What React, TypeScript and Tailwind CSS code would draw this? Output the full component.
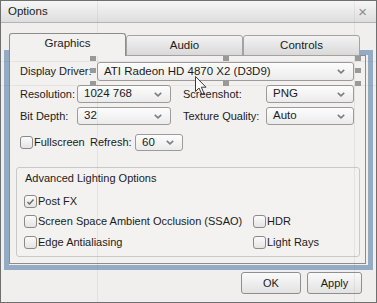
import React from "react";

const Chevron = () => (
  <svg width="8" height="5" viewBox="0 0 8 5" className="shrink-0">
    <polyline points="0.8,0.8 4,3.8 7.2,0.8" fill="none" stroke="#7d7d7d" strokeWidth="1.6" />
  </svg>
);

function Combo({ w, h = 18, text }: { w: string; h?: number; text: string }) {
  return (
    <div
      className={`${w} flex shrink-0 items-center justify-between rounded-[3px] border border-[#9b9b9b] bg-gradient-to-b from-[#fdfdfd] to-[#ebebeb] pl-[6px] pr-[8px] text-[#1b1b1b]`}
      style={{ height: h }}
    >
      <span className="whitespace-nowrap text-[11.5px] leading-none">{text}</span>
      <Chevron />
    </div>
  );
}

function Check({ checked = false }: { checked?: boolean }) {
  return (
    <div className="flex h-[13px] w-[13px] shrink-0 items-center justify-center rounded-[3px] border border-[#8a8a8a] bg-gradient-to-b from-[#fbfbfb] to-[#e4e4e4]">
      {checked && (
        <svg width="9" height="8" viewBox="0 0 9 8">
          <polyline points="1.5,4 3.5,6 7.5,1.5" fill="none" stroke="#666" strokeWidth="1.4" />
        </svg>
      )}
    </div>
  );
}

function Handle({ x, y }: { x: number; y: number }) {
  return <div className="absolute h-[5px] w-[6px] bg-[#999999]" style={{ left: x, top: y }} />;
}

export default function App() {
  return (
    <div
      className="relative flex h-[303px] w-[377px] flex-col overflow-hidden whitespace-nowrap border border-[#6f6f6f] bg-[#f0efee] text-[11px] text-[#1b1b1b]"
      style={{ fontFamily: '"Liberation Sans", Arial, sans-serif' }}
    >
      {/* title bar */}
      <div className="flex h-[22px] shrink-0 items-center justify-between border-b border-[#b4b4b4] bg-gradient-to-b from-[#f6f6f6] to-[#dedede] pl-[7px] pr-[9px]">
        <span className="text-[11.5px] text-[#222]">Options</span>
        <span className="text-[15px] leading-none text-[#8a8a8a]">×</span>
      </div>

      {/* body */}
      <div className="flex flex-1 flex-col pt-[10px]">
        {/* tabs */}
        <div className="relative z-10 -mb-px flex items-end pl-[8px] text-[11.5px]">
          <div className="flex h-[23px] w-[117px] items-center justify-center rounded-t-[3px] border border-b-0 border-[#8c8c8c] bg-[#f2f1f0] pb-[2px]">
            Graphics
          </div>
          <div className="flex h-[21px] w-[117px] items-center justify-center rounded-t-[3px] border border-[#a3a3a3] bg-gradient-to-b from-[#f3f3f3] to-[#d9d9d9] pt-px">
            Audio
          </div>
          <div className="flex h-[21px] w-[117px] items-center justify-center rounded-t-[3px] border border-[#a3a3a3] bg-gradient-to-b from-[#f3f3f3] to-[#d9d9d9] pt-px">
            Controls
          </div>
        </div>

        {/* panel */}
        <div className="ml-[8px] flex h-[209px] w-[357px] flex-col border border-[#8c8c8c] bg-[#f2f1f0] pt-[6px]">
          <div className="flex h-[19px] items-center pl-[10px]">
            <span className="w-[77px]">Display Driver:</span>
            <Combo w="w-[257px]" h={19} text="ATI Radeon HD 4870 X2 (D3D9)" />
          </div>
          <div className="mt-[4px] flex h-[18px] items-center pl-[10px]">
            <span className="w-[57px]">Resolution:</span>
            <Combo w="w-[94px]" text="1024 768" />
            <span className="ml-[12px] w-[83px]">Screenshot:</span>
            <Combo w="w-[88px]" text="PNG" />
          </div>
          <div className="mt-[4px] flex h-[18px] items-center pl-[10px]">
            <span className="w-[57px]">Bit Depth:</span>
            <Combo w="w-[94px]" text="32" />
            <span className="ml-[12px] w-[83px]">Texture Quality:</span>
            <Combo w="w-[88px]" text="Auto" />
          </div>
          <div className="mt-[9px] flex h-[17px] items-center pl-[10px]">
            <Check />
            <span className="ml-[1px] w-[56px]">Fullscreen</span>
            <span className="w-[45px]">Refresh:</span>
            <Combo w="w-[48px]" h={17} text="60" />
          </div>

          {/* group */}
          <div className="ml-[6px] mt-[16px] flex h-[90px] w-[344px] flex-col rounded-[3px] border border-[#c9c9c9] bg-[#f3f2f1] pl-[7px] pt-[3px]">
            <div className="pl-[1px] leading-[14px]">Advanced Lighting Options</div>
            <div className="mt-[10px] flex h-[13px] items-center">
              <Check checked />
              <span className="ml-[1px]">Post FX</span>
            </div>
            <div className="mt-[7px] flex h-[13px] items-center">
              <div className="flex w-[229px] items-center">
                <Check />
                <span className="ml-[1px]">Screen Space Ambient Occlusion (SSAO)</span>
              </div>
              <Check />
              <span className="ml-[1px]">HDR</span>
            </div>
            <div className="mt-[8px] flex h-[13px] items-center">
              <div className="flex w-[229px] items-center">
                <Check />
                <span className="ml-[1px]">Edge Antialiasing</span>
              </div>
              <Check />
              <span className="ml-[1px]">Light Rays</span>
            </div>
          </div>
        </div>

        {/* buttons */}
        <div className="mt-[8px] flex justify-end gap-[6px] pr-[14px]">
          <div className="flex h-[22px] w-[60px] items-center justify-center rounded-[3px] border border-[#8f8f8f] bg-gradient-to-b from-[#fafafa] to-[#e2e2e2]">
            OK
          </div>
          <div className="flex h-[22px] w-[55px] items-center justify-center rounded-[3px] border border-[#8f8f8f] bg-gradient-to-b from-[#fafafa] to-[#e2e2e2]">
            Apply
          </div>
        </div>
      </div>

      {/* editor overlay: blue selection frame */}
      <div className="pointer-events-none absolute left-[3px] top-[49px] h-[220px] w-[369px] border-[5px] border-[rgba(80,122,166,0.58)]" />

      {/* guide lines */}
      <div className="pointer-events-none absolute left-[96px] top-0 h-full w-px bg-[rgba(120,120,120,0.12)]" />
      <div className="pointer-events-none absolute left-[353px] top-0 h-full w-px bg-[rgba(120,120,120,0.12)]" />
      <div className="pointer-events-none absolute left-0 top-[60px] h-px w-full bg-[rgba(120,120,120,0.10)]" />
      <div className="pointer-events-none absolute left-0 top-[84px] h-px w-full bg-[rgba(120,120,120,0.10)]" />

      {/* handles */}
      <Handle x={89} y={55} />
      <Handle x={89} y={67} />
      <Handle x={89} y={80} />
      <Handle x={222} y={55} />
      <Handle x={222} y={80} />
      <Handle x={354} y={55} />
      <Handle x={354} y={67} />
      <Handle x={354} y={80} />

      {/* cursor */}
      <svg className="pointer-events-none absolute left-[194px] top-[75px]" width="13" height="20" viewBox="0 0 13 20">
        <path d="M0.5 0.5 L0.5 15.5 L4 12 L6.8 18.2 L9 17.2 L6.3 11.2 L11 11.2 Z" fill="#ffffff" stroke="#3a3a3a" strokeWidth="1" strokeLinejoin="round" />
      </svg>
    </div>
  );
}
